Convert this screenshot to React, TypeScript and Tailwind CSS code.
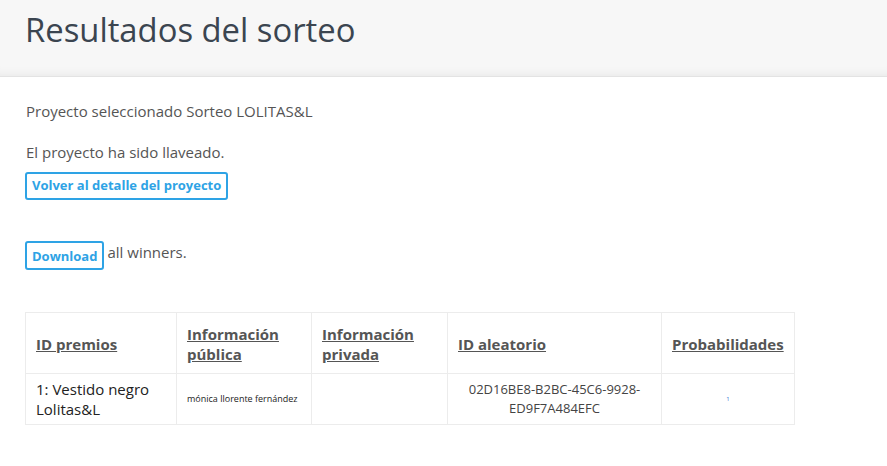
export default function App() {
  return (
    <div className="min-h-[466px] bg-white font-['Open_Sans',sans-serif] text-[#555]">
      <header className="h-[77px] bg-[#f7f7f7] border-b border-[#e3e3e3] shadow-[inset_0_-10px_10px_-8px_rgba(0,0,0,0.06)] px-[25px]">
        <h1 className="pt-[7px] text-[32.8px] leading-[46px] text-[#3b4550]">
          Resultados del sorteo
        </h1>
      </header>

      <main className="px-[25px]">
        <p className="mt-[23px] text-[15px] leading-[22px] ml-[1px]">
          Proyecto seleccionado Sorteo LOLITAS&amp;L
        </p>
        <p className="mt-[19px] text-[15px] leading-[22px] ml-[1px]">
          El proyecto ha sido llaveado.
        </p>
        <button className="mt-[9px] h-[28px] px-[5px] border-2 border-[#2ea3e5] rounded-[3px] text-[13px] font-bold text-[#2ea3e5]">
          Volver al detalle del proyecto
        </button>

        <div className="mt-[41px] flex items-start">
          <button className="h-[29px] px-[5px] pt-[2px] border-2 border-[#2ea3e5] rounded-[3px] text-[13px] font-bold text-[#2ea3e5]">
            Download
          </button>
          <span className="ml-[3px] text-[15px] leading-[22px]">all winners.</span>
        </div>

        <table className="mt-[42px] w-[770px] border-collapse border border-[#ececec] text-left">
          <thead>
            <tr className="h-[61px]">
              <th className="w-[151px] border border-[#ececec] px-[10px] pt-[2px] text-[15px] font-bold leading-[20px]">
                <a className="underline text-[#555]">ID premios</a>
              </th>
              <th className="w-[135px] border border-[#ececec] px-[10px] pt-[2px] text-[15px] font-bold leading-[20px]">
                <a className="underline text-[#555]">Información pública</a>
              </th>
              <th className="w-[136px] border border-[#ececec] px-[10px] pt-[2px] text-[15px] font-bold leading-[20px]">
                <a className="underline text-[#555]">Información privada</a>
              </th>
              <th className="w-[214px] border border-[#ececec] px-[10px] pt-[2px] text-[15px] font-bold leading-[20px]">
                <a className="underline text-[#555]">ID aleatorio</a>
              </th>
              <th className="border border-[#ececec] px-[10px] pt-[2px] text-[15px] font-bold leading-[20px]">
                <a className="underline text-[#555]">Probabilidades</a>
              </th>
            </tr>
          </thead>
          <tbody>
            <tr className="h-[51px]">
              <td className="border border-[#ececec] px-[10px] text-[15px] leading-[20px] text-[#222]">
                1: Vestido negro Lolitas&amp;L
              </td>
              <td className="border border-[#ececec] px-[10px] text-[9px] text-[#222]">
                mónica llorente fernández
              </td>
              <td className="border border-[#ececec] px-[10px]"></td>
              <td className="border border-[#ececec] px-[10px] text-center text-[13px] leading-[19px] text-[#444]">
                02D16BE8-B2BC-45C6-9928-ED9F7A484EFC
              </td>
              <td className="border border-[#ececec] px-[10px] text-center text-[6px] text-[#3a7bd5]">
                1
              </td>
            </tr>
          </tbody>
        </table>
      </main>
    </div>
  );
}
